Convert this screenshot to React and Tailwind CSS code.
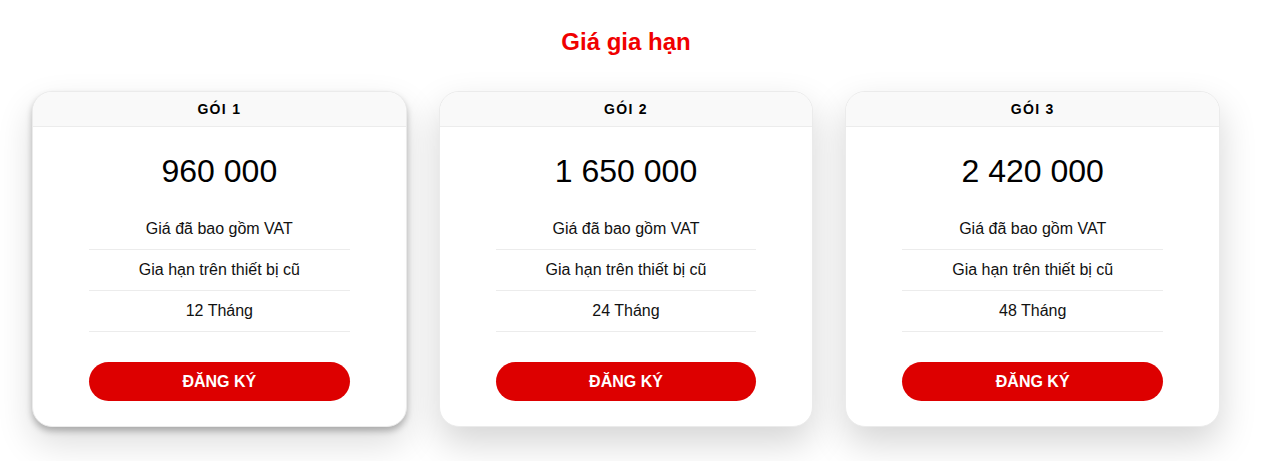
const plans = [
  { name: "GÓI 1", price: "960 000", months: "12 Tháng", active: true },
  { name: "GÓI 2", price: "1 650 000", months: "24 Tháng" },
  { name: "GÓI 3", price: "2 420 000", months: "48 Tháng" },
];

function PlanCard({ plan }) {
  return (
    <div
      className={`flex-1 overflow-hidden rounded-[20px] border border-[#ebebeb] bg-white ${
        plan.active
          ? "shadow-[0_4px_6px_rgba(0,0,0,0.25),0_16px_36px_rgba(0,0,0,0.14)]"
          : "shadow-[0_16px_36px_rgba(0,0,0,0.17)]"
      }`}
    >
      <div className="flex h-[35px] items-center justify-center border-b border-[#ececec] bg-[#f9f9f9] text-[14px] font-bold tracking-[1.3px] text-black">
        {plan.name}
      </div>
      <div className="px-[56px] pt-[25px] pb-[25px]">
        <div className="text-center text-[32px] leading-[38px] text-black">{plan.price}</div>
        <ul className="mt-[19px] text-center text-[16px] text-[#111]">
          {["Giá đã bao gồm VAT", "Gia hạn trên thiết bị cũ", plan.months].map((item) => (
            <li key={item} className="flex h-[41px] items-center justify-center border-b border-[#ececec]">
              {item}
            </li>
          ))}
        </ul>
        <button className="mt-[30px] flex h-[39px] w-full items-center justify-center rounded-full bg-[#dd0000] text-[16px] font-bold text-white">
          ĐĂNG KÝ
        </button>
      </div>
    </div>
  );
}

export default function App() {
  return (
    <div className="min-h-[461px] bg-white font-['Liberation_Sans',Arial,sans-serif]">
      <div className="w-[1252px] px-8">
        <h2 className="pt-[27px] text-center text-[24px] font-bold leading-[30px] text-[#f00000]">
          Giá gia hạn
        </h2>
        <div className="mt-[34px] flex gap-[32px]">
          {plans.map((plan) => (
            <PlanCard key={plan.name} plan={plan} />
          ))}
        </div>
      </div>
    </div>
  );
}
